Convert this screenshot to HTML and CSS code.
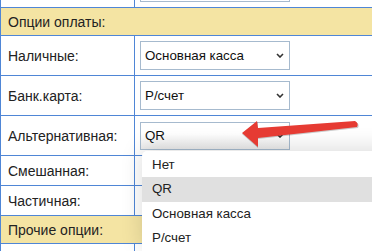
FILE: index.html
```html
<!DOCTYPE html>
<html lang="ru">
<head>
  <meta charset="UTF-8">
  <meta name="viewport" content="width=device-width, initial-scale=1.0">
  <title>Опции оплаты</title>
  <link rel="stylesheet" href="styles.css">
</head>
<body>
  <div class="page">
    <table class="options">
      <tr class="with-select">
        <td class="name"></td>
        <td><div class="select"></div></td>
      </tr>
      <tr class="section">
        <td colspan="2">Опции оплаты:</td>
      </tr>
      <tr class="with-select">
        <td class="name">Наличные:</td>
        <td><div class="select"><span>Основная касса</span><svg class="chev" width="8" height="5" viewBox="0 0 8 5"><path d="M1 1l3 3 3-3" /></svg></div></td>
      </tr>
      <tr class="with-select">
        <td class="name">Банк.карта:</td>
        <td><div class="select"><span>Р/счет</span><svg class="chev" width="8" height="5" viewBox="0 0 8 5"><path d="M1 1l3 3 3-3" /></svg></div></td>
      </tr>
      <tr class="with-select">
        <td class="name">Альтернативная:</td>
        <td>
          <div class="select open"><span>QR</span><svg class="chev" width="8" height="5" viewBox="0 0 8 5"><path d="M1 1l3 3 3-3" /></svg>
            <ul class="popup">
              <li>Нет</li>
              <li class="active">QR</li>
              <li>Основная касса</li>
              <li>Р/счет</li>
            </ul>
          </div>
        </td>
      </tr>
      <tr class="plain">
        <td class="name">Смешанная:</td>
        <td></td>
      </tr>
      <tr class="plain">
        <td class="name">Частичная:</td>
        <td></td>
      </tr>
      <tr class="section">
        <td colspan="2">Прочие опции:</td>
      </tr>
      <tr class="plain">
        <td class="name"></td>
        <td></td>
      </tr>
    </table>

    <svg class="arrow" width="130" height="40" viewBox="0 0 130 40">
      <path class="arrow-shadow" d="M0 15 L16 3 L16 10 L114 3 Q118 5 116 9 L16 20 L16 29 Z" />
      <path class="arrow-body" d="M0 14 L15 2 L16 9 L113 2 Q117 4 115 8 L16 19 L16 28 Z" />
    </svg>
  </div>
</body>
</html>
```

FILE: styles.css
```css
body {
  margin: 0;
  overflow: hidden;
  background: #fff;
  font-family: "Liberation Sans", Arial, sans-serif;
  font-size: 14px;
  color: #222;
}

.page {
  position: relative;
  width: 372px;
  height: 251px;
  overflow: hidden;
}

.options {
  border-collapse: collapse;
  width: 560px;
  margin-top: -33px;
}

.options td {
  border: 1px solid #4f86d6;
  padding: 0 7px;
  vertical-align: middle;
}

.options td.name {
  width: 119px;
}

.with-select td {
  height: 39px;
}

.plain td {
  height: 29px;
}

.section td {
  height: 27px;
  background: #f4e4a3;
}

.select {
  position: relative;
  box-sizing: border-box;
  width: 150px;
  height: 29px;
  border: 1px solid #a6bace;
  padding: 0 5px 0 4px;
  display: flex;
  align-items: center;
  justify-content: space-between;
  font-size: 13.33px;
  color: #111;
  background: #fff;
  margin-left: -2px;
}

.select.open {
  height: 28px;
  background: linear-gradient(#fff 40%, #ececec);
}

.chev path {
  fill: none;
  stroke: #333;
  stroke-width: 1.6;
}

.popup {
  position: absolute;
  top: 28px;
  left: 1px;
  width: 260px;
  margin: 0;
  padding: 2px 0 0;
  list-style: none;
  background: #fff;
  border-top-left-radius: 5px;
  box-shadow: 0 -3px 22px rgba(0, 0, 0, 0.14);
  z-index: 2;
}

.popup li {
  height: 24.5px;
  line-height: 24.5px;
  padding-left: 10px;
  font-size: 13.33px;
  color: #222;
}

.popup li.active {
  background: #e0e0e0;
}

.arrow {
  position: absolute;
  left: 242px;
  top: 119px;
  z-index: 3;
}

.arrow-body {
  fill: #e63b33;
}

.arrow-shadow {
  fill: rgba(0, 0, 0, 0.2);
}
```
